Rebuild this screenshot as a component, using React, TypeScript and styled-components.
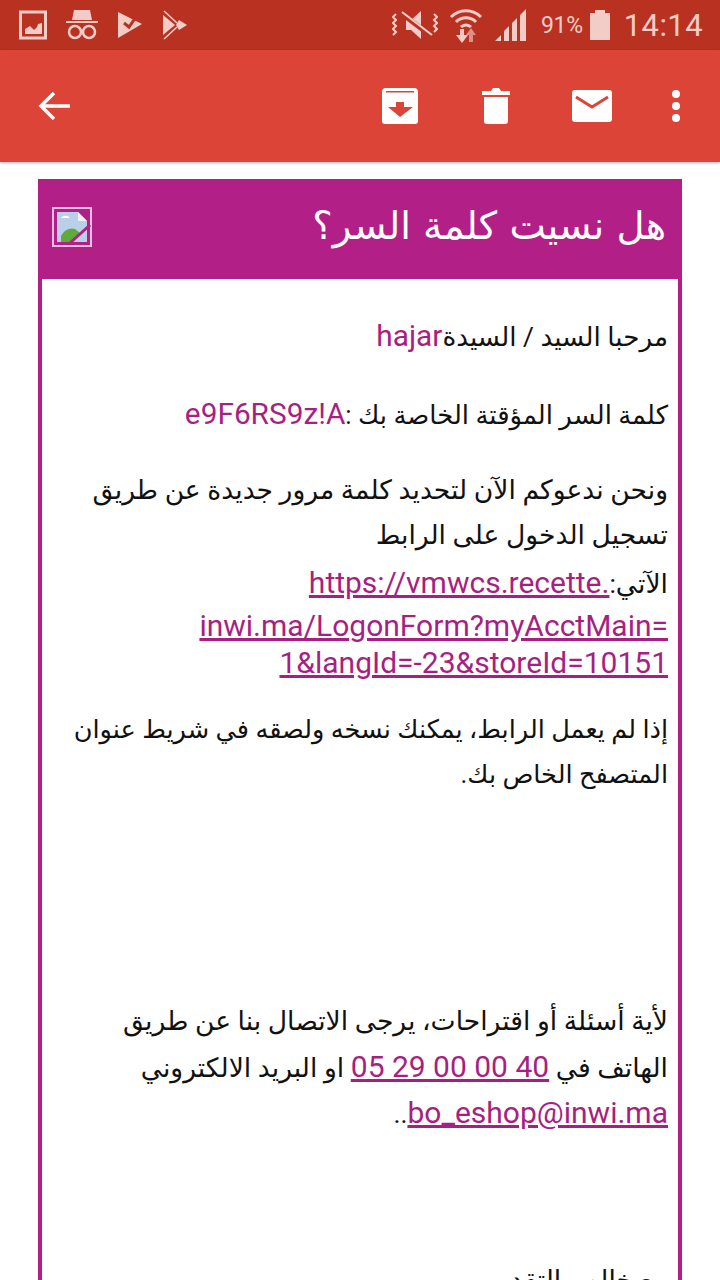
import React from "react";
import styled, { createGlobalStyle } from "styled-components";

const Global = createGlobalStyle`
  *, *::before, *::after { box-sizing: border-box; }
  html, body { margin: 0; padding: 0; background: #fff; }
  body { width: 720px; height: 1280px; overflow: hidden; font-family: Roboto, "DejaVu Sans", sans-serif; }
`;
const Screen = styled.div`width: 720px; height: 1280px; overflow: hidden; display: flex; flex-direction: column; background: #fff;`;
const StatusBar = styled.div`height: 50px; flex: none; background: #b93221; display: flex; align-items: center; justify-content: space-between; padding: 0 17px 0 19px; color: #f2cdc8;`;
const StatusGroup = styled.div`display: flex; align-items: center; gap: ${p => p.$gap ?? 0}px;`;
const Percent = styled.span`font-size: 23px; letter-spacing: -0.3px; margin: 0 -4px 0 2px;`;
const Clock = styled.span`font-size: 31px; letter-spacing: 0.4px; margin-left: 3px;`;
const Toolbar = styled.div`height: 112px; flex: none; background: #db4437; display: flex; align-items: center; justify-content: space-between; padding: 0 8px 0 37px; box-shadow: 0 1px 3px rgba(0,0,0,.3); position: relative;`;
const ToolActions = styled.div`display: flex; align-items: center;`;
const ToolButton = styled.div`width: ${p => p.$w ?? 96}px; display: flex; justify-content: center;`;
const Card = styled.div`margin: 17px 38px 0; border: solid #b21f87; border-width: 0 4px; flex: none;`;
const CardHead = styled.div`height: 100px; background: #b21f87; margin: 0 -4px; padding: 0 16px 4px 14px; display: flex; align-items: center; justify-content: space-between; direction: ltr;`;
const Title = styled.h1`margin: 0 0 4px; font: 400 38.600px "DejaVu Sans", sans-serif; color: #fff; direction: rtl;`;
const Body = styled.div`direction: rtl; padding: 34px 10px 0 6px; color: #111; font: 400 26.600px/45px Roboto, "DejaVu Sans", sans-serif;`;
const Para = styled.p`margin: 0 0 ${p => p.$after ?? 31}px; font-size: ${p => p.$size ?? 26.6}px;`;
const Accent = styled.span`color: #a81f82; font-size: 29.800px;`;
const Link = styled.a`color: #a81f82; text-decoration: underline; font-size: 30px; direction: ltr; unicode-bidi: isolate; line-height: ${p => (p.$lh ? `${p.$lh}px` : "inherit")};`;
const Tight = styled.span`display: block; line-height: 36px;`;

const Photo = () => (
  <svg width="28" height="30" viewBox="0 0 28 30"><path d="M1.500 2h25v26h-25z" fill="none" stroke="currentColor" strokeWidth="3"/><path d="M6 24v-5l5-3 4 4 3-3 1-3 4-1v11z" fill="currentColor"/></svg>
);
const Spy = () => (
  <svg width="32" height="32" viewBox="0 0 32 32" fill="currentColor"><path d="M8 1h16l2 10H6zM0 12h32v2H0z"/><g fill="none" stroke="currentColor" strokeWidth="2.500"><circle cx="9" cy="23" r="6"/><circle cx="23" cy="23" r="6"/><path d="M15 22h2"/></g></svg>
);
const Inbox = () => (
  <svg width="26" height="30" viewBox="0 0 26 30"><path d="M1 2l24 12L1 28z" fill="currentColor"/><path d="M7 13l5 4 9-13" fill="none" stroke="#b93221" strokeWidth="3"/><path d="M10 1l3 0 3 4-2 2z" fill="#b93221"/></svg>
);
const Play = () => (
  <svg width="26" height="30" viewBox="0 0 26 30"><path d="M1 5l12 10L1 25z" fill="currentColor"/><path d="M2 1l13 12M2 29l13-12" fill="none" stroke="currentColor" strokeWidth="1.600"/><path d="M17 10l8 5-8 5-3-5z" fill="currentColor"/></svg>
);
const Mute = () => (
  <svg width="46" height="30" viewBox="0 0 46 30" fill="currentColor"><path d="M14 10h5l10-9v28l-10-9h-5z"/><path d="M9 3l30 23" stroke="#b93221" strokeWidth="5"/><path d="M10 2l30 23" stroke="currentColor" strokeWidth="2.200"/><path d="M4 4l-3 3 3 3-3 3 3 3-3 3 3 3-3 3M42 4l3 3-3 3 3 3-3 3 3 3-3 3" fill="none" stroke="currentColor" strokeWidth="2"/></svg>
);
const Wifi = () => (
  <svg width="34" height="36" viewBox="0 0 34 36"><g fill="none" stroke="currentColor" strokeWidth="3"><path d="M2 10a21 21 0 0 1 30 0"/><path d="M7 15a14 14 0 0 1 20 0"/><path d="M12 20a7 7 0 0 1 10 0"/></g><path d="M11 22h4v6h4l-6 8-6-8h4z" fill="currentColor"/><path d="M20 35v-7h-3l5-7 5 7h-3v7z" fill="#dc8f84"/></svg>
);
const Signal = () => (
  <svg width="34" height="32" viewBox="0 0 34 32" fill="currentColor"><path d="M1 32l6-6v6zM10 32V22l5-5v15zM18 32V14l5-5v23zM26 32V6l6-6v32z"/></svg>
);
const Battery = () => (
  <svg width="20" height="30" viewBox="0 0 20 30" fill="currentColor"><path d="M5 0h10v3h5v27H0V3h5z"/></svg>
);
const Back = () => (
  <svg width="34" height="32" viewBox="0 0 34 32" fill="none" stroke="#fff" strokeWidth="3.500"><path d="M33 16H4M17 3L4 16l13 13"/></svg>
);
const Archive = () => (
  <svg width="36" height="36" viewBox="0 0 36 36"><path d="M4 0h28a4 4 0 0 1 4 4v29a3 3 0 0 1-3 3H3a3 3 0 0 1-3-3V4a4 4 0 0 1 4-4z" fill="#fff"/><path d="M4 3h28v1.500H4zM14 14h8v5h9L18 29 6 19h8z" fill="#db4437"/></svg>
);
const Trash = () => (
  <svg width="28" height="36" viewBox="0 0 28 36" fill="#fff"><path d="M0 3h9l2-3h6l2 3h9v4H0zM2 9h24v24a3 3 0 0 1-3 3H5a3 3 0 0 1-3-3z"/></svg>
);
const Mail = () => (
  <svg width="40" height="32" viewBox="0 0 40 32"><rect width="40" height="32" rx="3" fill="#fff"/><path d="M4 7l16 10L36 7" fill="none" stroke="#db4437" strokeWidth="3"/></svg>
);
const Dots = () => (
  <svg width="10" height="34" viewBox="0 0 10 34" fill="#fff"><circle cx="5" cy="5" r="4"/><circle cx="5" cy="17" r="4"/><circle cx="5" cy="29" r="4"/></svg>
);
const Broken = () => (
  <svg width="40" height="40" viewBox="0 0 40 40"><rect x="1" y="1" width="38" height="38" fill="#b21f87" stroke="#e3bfe0" strokeWidth="2"/><path d="M5 5h21l9 9v21H5z" fill="#b9d0e8"/><path d="M26 5v9h9z" fill="#f0f0f0"/><path d="M9 35v-6c3-6 9-9 14-7l5 4-9 9z" fill="#5cab3c"/><path d="M18 36l20-18" stroke="#b21f87" strokeWidth="3"/><path d="M9 11c2-3 7-3 9 0z" fill="#fff"/></svg>
);

export default function App() {
  return (
    <Screen>
      <Global />
      <StatusBar>
        <StatusGroup $gap={19}><Photo /><Spy /><Inbox /><Play /></StatusGroup>
        <StatusGroup $gap={11}><Mute /><Wifi /><Signal /><Percent>91%</Percent><Battery /><Clock>14:14</Clock></StatusGroup>
      </StatusBar>
      <Toolbar>
        <Back />
        <ToolActions>
          <ToolButton><Archive /></ToolButton>
          <ToolButton><Trash /></ToolButton>
          <ToolButton><Mail /></ToolButton>
          <ToolButton $w={72}><Dots /></ToolButton>
        </ToolActions>
      </Toolbar>
      <Card>
        <CardHead><Broken /><Title>هل نسيت كلمة السر؟</Title></CardHead>
        <Body>
          <Para $size={26.25}>مرحبا السيد / السيدة<Accent>hajar</Accent></Para>
          <Para $size={25.9} $after={29}>كلمة السر المؤقتة الخاصة بك :<Accent>e9F6RS9z!A</Accent></Para>
          <Para $after={25}>
            ونحن ندعوكم الآن لتحديد كلمة مرور جديدة عن طريق تسجيل الدخول على الرابط الآتي:<Link href="#" $lh={51}>https://vmwcs.recette.</Link>
            <Tight><Link href="#">inwi.ma/LogonForm?myAcctMain=</Link></Tight>
            <Tight><Link href="#">1&amp;langId=-23&amp;storeId=10151</Link></Tight>
          </Para>
          <Para $after={201} $size={25.6}>إذا لم يعمل الرابط، يمكنك نسخه ولصقه في شريط عنوان المتصفح الخاص بك.</Para>
          <Para $after={121}>
            لأية أسئلة أو اقتراحات، يرجى الاتصال بنا عن طريق الهاتف في <Link href="#" $lh={47}>05 29 00 00 40</Link> او البريد الالكتروني <Link href="#">bo_eshop@inwi.ma</Link>..
          </Para>
          <Para>مع خالص التقدير</Para>
        </Body>
      </Card>
    </Screen>
  );
}
